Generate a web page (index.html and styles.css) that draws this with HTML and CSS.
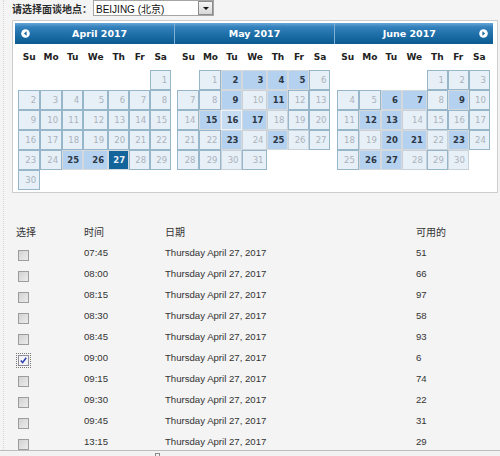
FILE: index.html
```html
<!DOCTYPE html>
<html>
<head>
<meta charset="utf-8">
<link rel="stylesheet" href="styles.css">
</head>
<body>
<div class="page">
  <div class="loc-row">
    <span class="loc-label">请选择面谈地点：</span>
    <div class="select"><span class="select-text">BEIJING (北京)</span><span class="select-btn"><span class="tri"></span></span></div>
  </div>

  <div class="cal-box">
    <div class="cal">
      <div class="month">
        <div class="m-head first">
          <span class="nav prev"><svg width="9" height="9" viewBox="0 0 9 9"><circle cx="4.5" cy="4.5" r="4.3" fill="#fff"/><path d="M5.6 2.3 L2.9 4.5 L5.6 6.7 Z" fill="#1b6aa3"/></svg></span>
          <span class="m-title">April 2017</span>
        </div>
        <div class="dow"><span>Su</span><span>Mo</span><span>Tu</span><span>We</span><span>Th</span><span>Fr</span><span>Sa</span></div>
        <div class="days">
          <span></span><span></span><span></span><span></span><span></span><span></span><span class="d">1</span>
          <span class="d">2</span><span class="d">3</span><span class="d">4</span><span class="d">5</span><span class="d">6</span><span class="d">7</span><span class="d">8</span>
          <span class="d">9</span><span class="d">10</span><span class="d">11</span><span class="d">12</span><span class="d">13</span><span class="d">14</span><span class="d">15</span>
          <span class="d">16</span><span class="d">17</span><span class="d">18</span><span class="d">19</span><span class="d">20</span><span class="d">21</span><span class="d">22</span>
          <span class="d">23</span><span class="d">24</span><span class="a">25</span><span class="a">26</span><span class="s">27</span><span class="d">28</span><span class="d">29</span>
          <span class="d">30</span>
        </div>
      </div>
      <div class="month">
        <div class="m-head">
          <span class="m-title">May 2017</span>
        </div>
        <div class="dow"><span>Su</span><span>Mo</span><span>Tu</span><span>We</span><span>Th</span><span>Fr</span><span>Sa</span></div>
        <div class="days">
          <span></span><span class="d">1</span><span class="a">2</span><span class="a">3</span><span class="a">4</span><span class="a">5</span><span class="d">6</span>
          <span class="d">7</span><span class="d">8</span><span class="a">9</span><span class="d g">10</span><span class="a">11</span><span class="d">12</span><span class="d">13</span>
          <span class="d">14</span><span class="a">15</span><span class="a w">16</span><span class="a">17</span><span class="d g">18</span><span class="d">19</span><span class="d">20</span>
          <span class="d">21</span><span class="d">22</span><span class="a">23</span><span class="d g">24</span><span class="a">25</span><span class="d g">26</span><span class="d">27</span>
          <span class="d">28</span><span class="d">29</span><span class="d g">30</span><span class="d">31</span>
        </div>
      </div>
      <div class="month">
        <div class="m-head">
          <span class="m-title">June 2017</span>
          <span class="nav next"><svg width="9" height="9" viewBox="0 0 9 9"><circle cx="4.5" cy="4.5" r="4.3" fill="#fff"/><path d="M3.4 2.3 L6.1 4.5 L3.4 6.7 Z" fill="#1b6aa3"/></svg></span>
        </div>
        <div class="dow"><span>Su</span><span>Mo</span><span>Tu</span><span>We</span><span>Th</span><span>Fr</span><span>Sa</span></div>
        <div class="days">
          <span></span><span></span><span></span><span></span><span class="d">1</span><span class="d">2</span><span class="d">3</span>
          <span class="d">4</span><span class="d">5</span><span class="a">6</span><span class="a">7</span><span class="d">8</span><span class="a">9</span><span class="d">10</span>
          <span class="d">11</span><span class="a">12</span><span class="a">13</span><span class="d g">14</span><span class="d">15</span><span class="d">16</span><span class="d">17</span>
          <span class="d">18</span><span class="d g">19</span><span class="a">20</span><span class="a">21</span><span class="d g">22</span><span class="a">23</span><span class="d">24</span>
          <span class="d">25</span><span class="a">26</span><span class="a">27</span><span class="d g">28</span><span class="d">29</span><span class="d g">30</span>
        </div>
      </div>
    </div>
  </div>

  <table class="slots">
    <colgroup><col class="c-sel"><col class="c-time"><col class="c-date"><col class="c-avail"></colgroup>
    <thead>
      <tr><th>选择</th><th>时间</th><th>日期</th><th>可用的</th></tr>
    </thead>
    <tbody>
      <tr><td class="sel"><span class="cb"></span></td><td>07:45</td><td>Thursday April 27, 2017</td><td>51</td></tr>
      <tr><td class="sel"><span class="cb"></span></td><td>08:00</td><td>Thursday April 27, 2017</td><td>66</td></tr>
      <tr><td class="sel"><span class="cb"></span></td><td>08:15</td><td>Thursday April 27, 2017</td><td>97</td></tr>
      <tr><td class="sel"><span class="cb"></span></td><td>08:30</td><td>Thursday April 27, 2017</td><td>58</td></tr>
      <tr><td class="sel"><span class="cb"></span></td><td>08:45</td><td>Thursday April 27, 2017</td><td>93</td></tr>
      <tr><td class="sel"><span class="cb checked"><svg width="9" height="9" viewBox="0 0 9 9"><path d="M1.8 4.6 L3.6 6.6 L7.2 1.8" fill="none" stroke="#2a3fb0" stroke-width="1.5"/></svg></span></td><td>09:00</td><td>Thursday April 27, 2017</td><td>6</td></tr>
      <tr><td class="sel"><span class="cb"></span></td><td>09:15</td><td>Thursday April 27, 2017</td><td>74</td></tr>
      <tr><td class="sel"><span class="cb"></span></td><td>09:30</td><td>Thursday April 27, 2017</td><td>22</td></tr>
      <tr><td class="sel"><span class="cb"></span></td><td>09:45</td><td>Thursday April 27, 2017</td><td>31</td></tr>
      <tr><td class="sel"><span class="cb"></span></td><td>13:15</td><td>Thursday April 27, 2017</td><td>29</td></tr>
    </tbody>
  </table>
</div>
<div class="statusbar"><span class="grip"></span></div>
</body>
</html>
```
FILE: styles.css
```css
html, body {
  margin: 0;
  padding: 0;
}
body {
  background: #f4f4f4;
  font-family: "Liberation Sans", Arial, sans-serif;
  color: #333;
  overflow: hidden;
}
.page {
  margin-left: 3px;
  border-left: 1px dotted #d6d6d6;
  min-height: 456px;
  padding-left: 8px;
}

/* location row */
.loc-row {
  display: flex;
  align-items: center;
  height: 17px;
}
.loc-label {
  font-family: "Noto Sans CJK SC", sans-serif;
  font-weight: bold;
  font-size: 10px;
  color: #2a2a2a;
  width: 81px;
  white-space: nowrap;
}
.select {
  box-sizing: border-box;
  width: 121px;
  height: 16px;
  border: 1px solid #a5a5a5;
  background: #fff;
  display: flex;
  align-items: center;
  justify-content: space-between;
  margin-top: -1px;
}
.select-text {
  font-family: "Liberation Sans", "Noto Sans CJK SC", sans-serif;
  font-size: 10px;
  color: #111;
  padding-left: 2px;
}
.select-btn {
  box-sizing: border-box;
  width: 15px;
  height: 14px;
  border: 1px solid #8c8c8c;
  background: linear-gradient(#f6f6f6, #d8d8d8);
  display: flex;
  align-items: center;
  justify-content: center;
}
.tri {
  width: 0;
  height: 0;
  border-left: 3px solid transparent;
  border-right: 3px solid transparent;
  border-top: 3px solid #111;
}

/* calendar */
.cal-box {
  box-sizing: border-box;
  width: 486px;
  margin-top: 3px;
  border: 1px solid #cdcdcd;
  background: #fff;
  padding: 2px 4px 2px 2px;
}
.cal {
  display: flex;
  font-family: "DejaVu Sans", Verdana, sans-serif;
}
.month {
  flex: 1 1 0;
  min-width: 0;
}
.m-head {
  height: 21px;
  box-sizing: border-box;
  background: linear-gradient(#6aa7d6 0%, #3582bd 18%, #1e6ea8 55%, #0b5b91 100%);
  border-left: 1px solid #7fb0d6;
  display: flex;
  align-items: center;
  justify-content: center;
  padding: 0 5px;
}
.m-head.first {
  border-left: none;
}
.m-title {
  color: #fff;
  font-weight: bold;
  font-size: 9.5px;
  flex: 1;
  text-align: center;
}
.nav {
  width: 9px;
  height: 9px;
  display: flex;
}
.nav.prev {
  margin-left: 1px;
}
.nav svg {
  display: block;
}
.dow,
.days {
  display: grid;
  grid-template-columns: 22px 22px 21px 25px 21px 21px 21px;
  width: 153px;
  margin: 0 auto;
}
.dow {
  height: 26px;
  align-items: center;
}
.dow span {
  text-align: center;
  font-weight: bold;
  font-size: 9px;
  color: #222;
}
.days {
  grid-auto-rows: 20px;
}
.days span {
  box-sizing: border-box;
  font-size: 8.5px;
  text-align: right;
  padding-right: 3px;
  line-height: 18px;
}
.days .d {
  background: #e7eff7;
  border: 1px solid #98b6ca;
  color: #aab3bc;
}
.days .d.g {
  border-color: #c7d2da;
}
.days .a {
  background: #b5d1f0;
  border: 1px solid #d6d9dc;
  color: #2c3744;
  font-weight: bold;
}
.days .a.w {
  border-color: #eef2f6;
  background: #c5dcf3;
}
.days .s {
  background: #12649b;
  border: 1px solid #d6d9dc;
  color: #e6eef5;
  font-weight: bold;
}

/* slots */
.slots {
  margin-top: 28px;
  margin-left: 4px;
  border-collapse: collapse;
  table-layout: fixed;
  width: 470px;
  font-size: 9.6px;
  color: #333;
}
.c-sel { width: 68px; }
.c-time { width: 81px; }
.c-date { width: 251px; }
.slots th {
  font-family: "Noto Sans CJK SC", sans-serif;
  font-weight: normal;
  font-size: 10px;
  text-align: left;
  height: 21px;
  padding: 0;
  color: #333;
}
.slots td {
  height: 21px;
  padding: 0;
  vertical-align: middle;
  white-space: nowrap;
}
.slots td.sel {
  padding-left: 2px;
}
.cb {
  box-sizing: border-box;
  display: block;
  width: 11px;
  height: 11px;
  margin-top: 5px;
  border: 1px solid #9c9c9c;
  background: linear-gradient(135deg, #d2d2d2, #ececec);
}
.cb.checked {
  background: #f3f3f8;
  border-color: #8d8d9c;
  outline: 1px dotted #777;
  outline-offset: 1px;
}
.cb.checked svg {
  display: block;
}

/* bottom bar */
.statusbar {
  position: fixed;
  left: 0;
  right: 0;
  bottom: 0;
  height: 5px;
  background: #f2f2f2;
  border-top: 1px solid #bcbcbc;
}
.grip {
  position: absolute;
  left: 155px;
  top: 2px;
  width: 5px;
  height: 4px;
  border: 1px solid #888;
  border-bottom: none;
  box-sizing: border-box;
}
```
